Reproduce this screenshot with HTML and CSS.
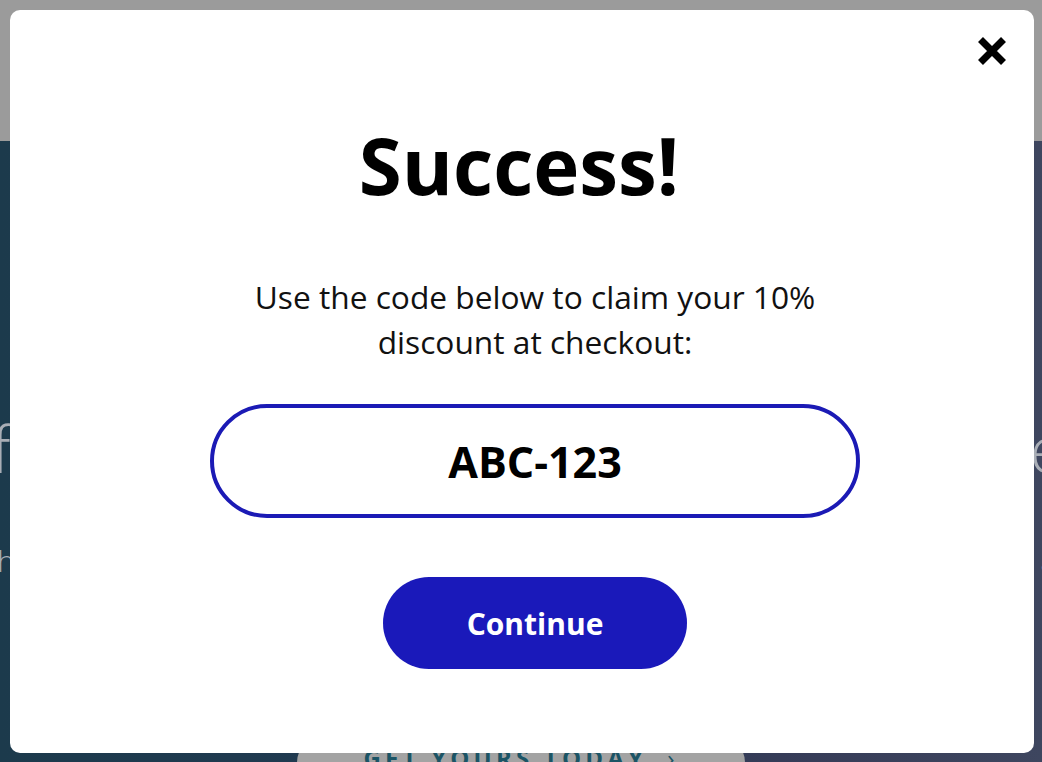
FILE: index.html
```html
<!DOCTYPE html>
<html lang="en">
<head>
<meta charset="utf-8">
<title>Success</title>
<link rel="stylesheet" href="styles.css">
</head>
<body>
<div class="page">
  <header class="topbar"></header>
  <section class="hero">
    <p class="hero-title">Give the gift of celebrating the moments that matter to everyone</p>
    <p class="hero-sub">Discover thoughtful gifts made for every single person and every special occasion in your life and beyond for</p>
    <a class="hero-cta" href="#">GET YOURS TODAY<span class="chev">›</span></a>
  </section>
</div>
<div class="overlay">
  <div class="modal" role="dialog" aria-labelledby="m-title">
    <button class="close" aria-label="Close">
      <svg width="32" height="32" viewBox="0 0 32 32"><path d="M4.5 4.5 L27.5 27.5 M27.5 4.5 L4.5 27.5" stroke="#000" stroke-width="7" stroke-linecap="butt" fill="none"/></svg>
    </button>
    <div class="modal-body">
      <h1 id="m-title" class="title">Success!</h1>
      <p class="msg">Use the code below to claim your 10%<br>discount at checkout:</p>
      <div class="code">ABC-123</div>
      <button class="continue">Continue</button>
    </div>
  </div>
</div>
</body>
</html>
```
FILE: styles.css
```css
* { box-sizing: border-box; }
html, body { margin: 0; padding: 0; }
body {
  width: 1042px;
  height: 762px;
  overflow: hidden;
  font-family: "Open Sans", "Liberation Sans", sans-serif;
}
.page {
  display: flex;
  flex-direction: column;
  height: 762px;
}
.topbar {
  height: 141px;
  background: #9b9b9b;
  flex: none;
}
.hero {
  flex: 1;
  background: linear-gradient(90deg, #1c3a4c 0%, #223a52 45%, #363c58 75%, #3e465f 100%);
  display: flex;
  flex-direction: column;
  align-items: center;
  overflow: hidden;
  padding-top: 268px;
}
.hero-title {
  margin: 0;
  white-space: nowrap;
  font-size: 64px;
  line-height: 80px;
  font-weight: 300;
  color: #a9aeb6;
}
.hero-sub {
  margin: 52px 0 0;
  white-space: nowrap;
  font-size: 30px;
  line-height: 40px;
  font-weight: 300;
  color: #a9aeb6;
}
.hero-cta {
  margin-top: 152px;
  width: 448px;
  height: 60px;
  border-radius: 30px 30px 0 0;
  background: #a3a3a3;
  color: #1b5465;
  text-decoration: none;
  font-weight: 700;
  font-size: 24px;
  letter-spacing: 4.2px;
  text-align: center;
  line-height: 34px;
  padding-top: 8px;
  flex: none;
}
.chev {
  margin-left: 20px;
  font-weight: 400;
}
.overlay {
  position: fixed;
  inset: 0;
}
.modal {
  position: absolute;
  left: 10px;
  top: 10px;
  width: 1024px;
  height: 743px;
  background: #fff;
  border-radius: 10px;
}
.close {
  position: absolute;
  top: 25px;
  right: 26px;
  width: 32px;
  height: 32px;
  padding: 0;
  border: 0;
  background: none;
  cursor: pointer;
  display: flex;
}
.modal-body {
  display: flex;
  flex-direction: column;
  align-items: center;
  padding: 117px 0 0 26px;
}
.title {
  margin: 0;
  font-size: 78px;
  line-height: 76px;
  font-weight: 700;
  color: #000;
  margin-left: -32px;
}
.msg {
  margin: 71px 0 0;
  font-size: 31.7px;
  line-height: 45px;
  text-align: center;
  color: #111;
}
.code {
  margin-top: 40px;
  width: 650px;
  height: 114px;
  border: 4px solid #1b1ab5;
  border-radius: 57px;
  display: flex;
  align-items: center;
  justify-content: center;
  font-size: 43px;
  font-weight: 700;
  color: #000;
}
.continue {
  margin-top: 59px;
  width: 304px;
  height: 92px;
  border: 0;
  border-radius: 46px;
  background: #1a19ba;
  color: #fff;
  font-family: inherit;
  font-size: 30px;
  font-weight: 700;
  cursor: pointer;
}
```
